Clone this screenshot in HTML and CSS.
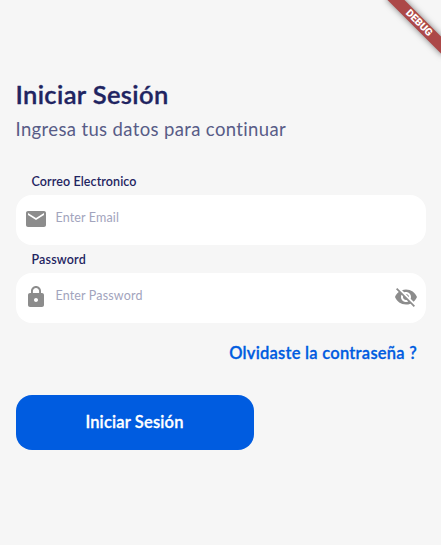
FILE: index.html
```html
<!DOCTYPE html>
<html lang="es">
<head>
<meta charset="utf-8">
<title>Iniciar Sesión</title>
<link rel="stylesheet" href="styles.css">
</head>
<body>
<div class="banner"><span>DEBUG</span></div>
<main class="login">
  <h1 class="title"><span>Iniciar Sesión</span></h1>
  <p class="subtitle"><span>Ingresa tus datos para continuar</span></p>
  <form class="form">
    <div class="label label-email"><span>Correo Electronico</span></div>
    <div class="field">
      <svg class="icon" viewBox="0 0 24 24"><path d="M20 4H4c-1.100 0-1.990.9-1.990 2L2 18c0 1.100.9 2 2 2h16c1.100 0 2-.9 2-2V6c0-1.100-.9-2-2-2zm0 4l-8 5-8-5V6l8 5 8-5v2z"/></svg>
      <span class="hint hint-email">Enter Email</span>
    </div>
    <div class="label label-password"><span>Password</span></div>
    <div class="field">
      <svg class="icon" viewBox="0 0 24 24"><path d="M18 8h-1V6c0-2.760-2.240-5-5-5S7 3.240 7 6v2H6c-1.100 0-2 .9-2 2v10c0 1.100.9 2 2 2h12c1.100 0 2-.9 2-2V10c0-1.100-.9-2-2-2zm-6 9c-1.100 0-2-.9-2-2s.9-2 2-2 2 .9 2 2-.9 2-2 2zm3.100-9H8.900V6c0-1.710 1.390-3.100 3.100-3.100 1.710 0 3.100 1.390 3.100 3.100v2z"/></svg>
      <span class="hint hint-password">Enter Password</span>
      <svg class="icon eye" viewBox="0 0 24 24"><path d="M12 7c2.760 0 5 2.240 5 5 0 .65-.13 1.260-.36 1.830l2.920 2.920c1.510-1.260 2.700-2.890 3.430-4.750-1.730-4.390-6-7.500-11-7.500-1.400 0-2.740.25-3.980.7l2.160 2.160C10.740 7.130 11.350 7 12 7zM2 4.270l2.280 2.280.46.46C3.080 8.300 1.780 10.020 1 12c1.730 4.390 6 7.500 11 7.500 1.550 0 3.030-.3 4.380-.84l.42.42L19.730 22 21 20.730 3.270 3 2 4.270zM7.530 9.800l1.550 1.550c-.05.21-.08.43-.08.65 0 1.660 1.340 3 3 3 .22 0 .44-.03.65-.08l1.550 1.550c-.67.33-1.410.53-2.200.53-2.760 0-5-2.240-5-5 0-.79.2-1.530.53-2.200zm4.310-.78l3.150 3.150.02-.16c0-1.660-1.340-3-3-3l-.17.01z"/></svg>
    </div>
    <a class="forgot"><span>Olvidaste la contraseña ?</span></a>
    <button class="submit" type="button"><span>Iniciar Sesión</span></button>
  </form>
</main>
</body>
</html>
```
FILE: styles.css
```css
* { box-sizing: border-box; }
body {
  margin: 0;
  height: 545px;
  overflow: hidden;
  position: relative;
  background: #f6f6f6;
  color: #1f2461;
  font-family: Lato, sans-serif;
  font-variant-ligatures: none;
}
.login { padding: 79px 15.500px 0; }
.title {
  margin: 0;
  font-size: 25.500px;
  line-height: 31px;
  font-weight: 600;
  letter-spacing: .36px;
  -webkit-text-stroke: .35px;
  white-space: nowrap;
}
.subtitle {
  margin: 9px 0 0;
  font-size: 18.500px;
  line-height: 21px;
  letter-spacing: .36px;
  color: #585c87;
  white-space: nowrap;
}
.form { display: flex; flex-direction: column; margin-top: 34px; }
.label {
  height: 21px;
  padding-left: 16px;
  font-size: 12.500px;
  line-height: 16px;
  font-weight: 600;
  letter-spacing: .1px;
}
.label-password { height: 28px; padding-top: 7px; letter-spacing: .16px; }
.field {
  display: flex;
  align-items: center;
  height: 50px;
  padding: 0 8px;
  border-radius: 16px;
  background: #fff;
}
.icon { width: 24px; height: 24px; margin: -2px 0 0; fill: #8c8c8c; flex: none; }
.hint {
  margin: -4px 0 0 8px;
  font-size: 12.500px;
  line-height: 16px;
  letter-spacing: .15px;
  color: #a2a4bd;
}
.eye { margin-left: auto; }
.forgot {
  align-self: flex-end;
  margin: 20px 8.500px 0 0;
  font-size: 16.500px;
  line-height: 20px;
  font-weight: 600;
  letter-spacing: .25px;
  -webkit-text-stroke: .3px;
  color: #005ce0;
  white-space: nowrap;
}
.submit {
  width: 238px;
  height: 55px;
  margin-top: 32px;
  padding: 0 0 1px;
  border: 0;
  border-radius: 16px;
  background: #005ce0;
  color: #fff;
  font: 600 16.500px/20px Lato, sans-serif;
  letter-spacing: .17px;
  -webkit-text-stroke: .3px;
}
.banner {
  position: absolute;
  left: 378.500px;
  top: 17px;
  width: 80px;
  height: 12px;
  transform: rotate(45deg);
  background: #ac4848;
  box-shadow: 0 0 6px rgba(0, 0, 0, .5);
  color: #fff;
  font: 900 10.200px/12px Roboto, sans-serif;
  text-align: center;
}
```
